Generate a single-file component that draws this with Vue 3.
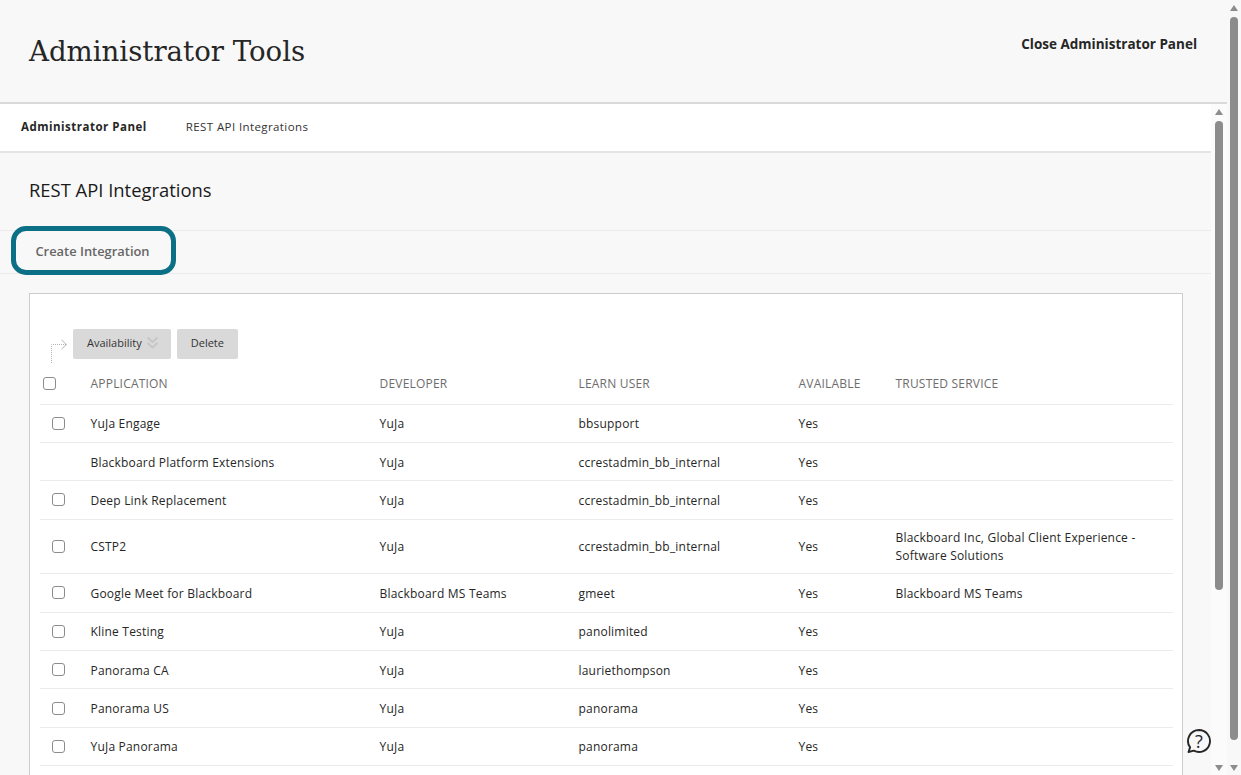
<template>
  <div class="page">
    <div class="window">
      <header class="top-header">
        <h1 class="title">Administrator Tools</h1>
        <a href="#" class="close-link">Close Administrator Panel</a>
      </header>

      <div class="panel-frame">
        <main class="content">
          <nav class="breadcrumbs">
            <a href="#" class="crumb crumb-root">Administrator Panel</a>
            <a href="#" class="crumb">REST API Integrations</a>
          </nav>

          <h2 class="section-title">REST API Integrations</h2>

          <div class="action-bar">
            <button class="create-btn">Create Integration</button>
          </div>

          <section class="list-card">
            <div class="toolbar">
              <svg class="select-arrow" width="18" height="28" viewBox="0 0 18 28" fill="none" stroke="#b5b5b5" stroke-width="1">
                <path d="M1.5 27V8.5H16" stroke-dasharray="1 1"></path>
                <path d="M11.5 4l5 4.500-5 4.500"></path>
              </svg>
              <button class="tool-btn avail-btn">
                <span>Availability</span>
                <svg width="13" height="13" viewBox="0 0 13 13" fill="none" stroke="#c6c6c6" stroke-width="1.800">
                  <path d="M1.500 1.500 6.500 6l5-4.500"></path>
                  <path d="M1.500 7 6.500 11.500l5-4.500"></path>
                </svg>
              </button>
              <button class="tool-btn"><span>Delete</span></button>
            </div>

            <table class="list-table">
              <colgroup>
                <col class="col-check" />
                <col class="col-app" />
                <col class="col-dev" />
                <col class="col-user" />
                <col class="col-avail" />
                <col />
              </colgroup>
              <thead>
                <tr>
                  <th class="head-check"><input type="checkbox" class="check" /></th>
                  <th>Application</th>
                  <th>Developer</th>
                  <th>Learn User</th>
                  <th>Available</th>
                  <th>Trusted Service</th>
                </tr>
              </thead>
              <tbody>
                <tr v-for="row in rows" :key="row.app" :class="{ tall: row.tall }">
                  <td class="cell-check"><input v-if="!row.locked" type="checkbox" class="check" /></td>
                  <td>{{ row.app }}</td>
                  <td>{{ row.dev }}</td>
                  <td>{{ row.user }}</td>
                  <td>Yes</td>
                  <td>{{ row.trusted }}</td>
                </tr>
              </tbody>
            </table>
          </section>
        </main>

        <div class="scrollbar inner-bar">
          <span class="arrow up"></span>
          <span class="thumb"></span>
          <span class="arrow down"></span>
        </div>

        <button class="help-btn" aria-label="Help">
          <svg width="26" height="26" viewBox="0 0 26 26" fill="none" stroke="#262626" stroke-width="1.900">
            <path d="M13 2a11 11 0 1 1-5.200 20.700L2.500 24l1.600-4.600A11 11 0 0 1 13 2z" stroke-linejoin="round"></path>
            <text x="13" y="19.500" text-anchor="middle" class="help-mark">?</text>
          </svg>
        </button>
      </div>
    </div>

    <div class="scrollbar outer-bar">
      <span class="arrow up"></span>
      <span class="thumb"></span>
      <span class="arrow down"></span>
    </div>
  </div>
</template>

<script setup>
const rows = [
  { app: 'YuJa Engage', dev: 'YuJa', user: 'bbsupport', trusted: '' },
  { app: 'Blackboard Platform Extensions', dev: 'YuJa', user: 'ccrestadmin_bb_internal', trusted: '', locked: true },
  { app: 'Deep Link Replacement', dev: 'YuJa', user: 'ccrestadmin_bb_internal', trusted: '' },
  { app: 'CSTP2', dev: 'YuJa', user: 'ccrestadmin_bb_internal', trusted: 'Blackboard Inc, Global Client Experience - Software Solutions', tall: true },
  { app: 'Google Meet for Blackboard', dev: 'Blackboard MS Teams', user: 'gmeet', trusted: 'Blackboard MS Teams' },
  { app: 'Kline Testing', dev: 'YuJa', user: 'panolimited', trusted: '' },
  { app: 'Panorama CA', dev: 'YuJa', user: 'lauriethompson', trusted: '' },
  { app: 'Panorama US', dev: 'YuJa', user: 'panorama', trusted: '' },
  { app: 'YuJa Panorama', dev: 'YuJa', user: 'panorama', trusted: '' }
]
</script>

<style scoped>
.page {
  display: flex;
  height: 775px;
  overflow: hidden;
  background: #f8f8f8;
  font-family: "Open Sans", sans-serif;
  color: #262626;
}

.window {
  width: 1227px;
  display: flex;
  flex-direction: column;
}

.top-header {
  height: 102px;
  flex: none;
  display: flex;
  justify-content: space-between;
  align-items: flex-start;
  padding: 0 30px 0 29px;
  border-bottom: 2px solid #d9d9d9;
}

.title {
  margin: 31px 0 0;
  font-family: "DejaVu Serif", serif;
  font-size: 27.600px;
  line-height: 42px;
  font-weight: 400;
  color: #262626;
}

.close-link {
  margin-top: 35px;
  font-size: 13.500px;
  line-height: 18px;
  font-weight: 700;
  color: #262626;
  text-decoration: none;
}

.panel-frame {
  position: relative;
  flex: 1;
  min-height: 0;
  display: flex;
}

.content {
  width: 1211px;
  flex: none;
  overflow: hidden;
}

.breadcrumbs {
  display: flex;
  align-items: center;
  gap: 39px;
  padding: 0 0 2px 21px;
  background: #fff;
  border-bottom: 2px solid #e5e5e5;
  height: 45px;
  font-size: 11.500px;
  letter-spacing: 0.400px;
}

.crumb {
  color: #333;
  text-decoration: none;
}

.crumb-root {
  font-weight: 700;
  color: #262626;
  letter-spacing: 0.500px;
}

.section-title {
  margin: 0;
  padding: 24px 0 0 29px;
  height: 53px;
  font-size: 18.400px;
  line-height: 26px;
  font-weight: 400;
  color: #1a1a1a;
  box-sizing: border-box;
}

.action-bar {
  margin-top: 24px;
  height: 44px;
  border-top: 1px solid #ebebeb;
  border-bottom: 1px solid #ebebeb;
  box-sizing: border-box;
  position: relative;
}

.create-btn {
  position: absolute;
  left: 11px;
  top: -5px;
  width: 165px;
  height: 49px;
  background: #f8f8f8;
  border: 5px solid #0b6f85;
  border-radius: 15px;
  font-family: inherit;
  font-size: 12.900px;
  font-weight: 600;
  color: #666;
  padding: 0 2px 0 0;
}

.list-card {
  margin: 19px 28px 0 29px;
  padding: 35px 10px 40px;
  background: #fff;
  border: 1px solid #cdcdcd;
}

.toolbar {
  display: flex;
  align-items: flex-start;
  gap: 6px;
  height: 30px;
  padding-left: 33px;
  position: relative;
}

.select-arrow {
  position: absolute;
  left: 10px;
  top: 7px;
}

.tool-btn {
  height: 30px;
  display: flex;
  align-items: center;
  gap: 4px;
  padding: 0 14px 3px;
  background: #d9d9d9;
  border: none;
  border-radius: 2px;
  font-family: inherit;
  font-size: 11px;
  color: #333;
}

.avail-btn {
  padding-right: 12px;
}

.list-table {
  width: 1133px;
  border-collapse: collapse;
  table-layout: fixed;
  font-size: 12px;
  letter-spacing: 0.200px;
}

.col-check { width: 40.500px; }
.col-app { width: 289px; }
.col-dev { width: 199px; }
.col-user { width: 220px; }
.col-avail { width: 97px; }

th {
  height: 45px;
  padding: 5px 10px 0;
  text-align: left;
  font-weight: 400;
  font-size: 12px;
  text-transform: uppercase;
  color: #6d6d6d;
  border-bottom: 1px solid #ebebeb;
  box-sizing: border-box;
}

td {
  height: 38.400px;
  padding: 2px 10px 0;
  border-bottom: 1px solid #ebebeb;
  line-height: 18px;
  color: #262626;
  box-sizing: border-box;
}

.tall td {
  height: 54.500px;
}

th.head-check {
  padding: 0 0 0 3px;
  vertical-align: top;
}

.head-check .check {
  margin-top: 18px;
}

td.cell-check {
  padding: 0 0 0 12px;
}

.check {
  appearance: none;
  display: block;
  width: 13px;
  height: 13px;
  margin: 0;
  background: #fff;
  border: 1px solid #8c8c8c;
  border-radius: 3px;
}

.scrollbar {
  flex: none;
  display: flex;
  flex-direction: column;
  align-items: center;
}

.inner-bar {
  width: 16px;
  background: #fbfbfb;
  padding: 5px 0 4px;
  box-sizing: border-box;
}

.outer-bar {
  width: 14px;
  padding: 5px 0 4px;
  box-sizing: border-box;
}

.arrow {
  width: 0;
  height: 0;
  border-left: 4.500px solid transparent;
  border-right: 4.500px solid transparent;
}

.arrow.up {
  border-bottom: 6px solid #8c8c8c;
}

.arrow.down {
  border-top: 6px solid #8c8c8c;
  margin-top: auto;
}

.thumb {
  width: 8px;
  background: #8c8c8c;
  border-radius: 4px;
  margin-top: 6px;
}

.inner-bar .thumb {
  height: 469px;
}

.outer-bar .thumb {
  height: 723px;
}

.help-btn {
  position: absolute;
  left: 1186px;
  top: 624px;
  padding: 0;
  background: none;
  border: none;
  width: 26px;
  height: 26px;
}

.help-mark {
  font-family: "Open Sans", sans-serif;
  font-size: 18px;
  fill: #262626;
  stroke: none;
}
</style>

<style>
html,
body {
  margin: 0;
  overflow: hidden;
}
</style>
